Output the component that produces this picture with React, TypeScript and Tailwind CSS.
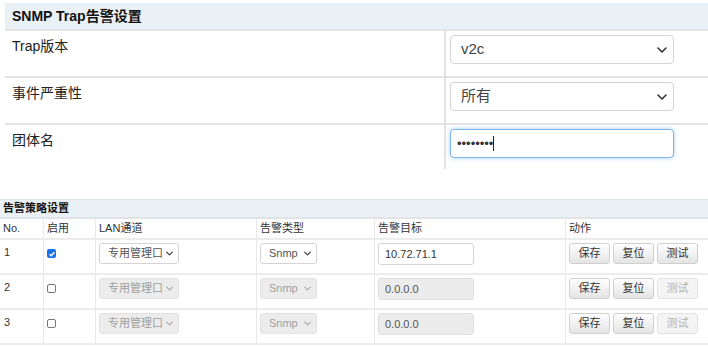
import React from 'react';

const font = { fontFamily: '"Liberation Sans", Arial, "Noto Sans CJK SC", sans-serif' };

const Chevron: React.FC<{ className?: string }> = ({ className = '' }) => (
  <svg viewBox="0 0 10 6" className={className} fill="none" stroke="currentColor" strokeWidth="1.6" strokeLinecap="round" strokeLinejoin="round">
    <path d="M1 1l4 4 4-4" />
  </svg>
);

const TopRow: React.FC<{ label: string; children: React.ReactNode; last?: boolean }> = ({ label, children, last }) => (
  <div className={`grid grid-cols-[439px_1fr] ${last ? 'h-[44px]' : 'h-[47px] border-b-2 border-[#e3e3e3]'}`}>
    <div className="px-[7px] pt-[5px] text-[14px] text-[#222]">{label}</div>
    <div className="border-l-2 border-[#e3e3e3] pl-[4px] pt-[4px]">{children}</div>
  </div>
);

const BigSelect: React.FC<{ value: string }> = ({ value }) => (
  <div className="w-[224px] h-[29px] rounded-[4px] border border-[#d4d4d4] bg-white flex items-center justify-between pl-[10px] pr-[6px] text-[15px] text-[#444]">
    <span>{value}</span>
    <Chevron className="w-[10px] h-[6px] text-[#333]" />
  </div>
);

const rows = [
  { no: '1', on: true, ip: '10.72.71.1' },
  { no: '2', on: false, ip: '0.0.0.0' },
  { no: '3', on: false, ip: '0.0.0.0' },
];

const cols = 'grid grid-cols-[43px_52px_161px_118px_191px_1fr]';
const cell = 'border-l border-[#e8e8e8] pl-[3px]';

const SmallSelect: React.FC<{ value: string; width: string; off: boolean }> = ({ value, width, off }) => (
  <div className={`${width} h-[21px] rounded-[3px] border flex items-center justify-between pl-[8px] pr-[5px] text-[11px] whitespace-nowrap ${off ? 'bg-[#ececec] border-[#e2e2e2] text-[#a0a0a0]' : 'bg-white border-[#d4d4d4] text-[#555]'}`}>
    <span>{value}</span>
    <Chevron className={`w-[7px] h-[5px] shrink-0 ${off ? 'text-[#aaa]' : 'text-[#333]'}`} />
  </div>
);

const Btn: React.FC<{ label: string; off?: boolean }> = ({ label, off }) => (
  <div className={`w-[41px] h-[21px] rounded-[3px] border flex items-center justify-center text-[11px] ${off ? 'border-[#e2e2e2] bg-[#f4f4f4] text-[#b5b5b5]' : 'border-[#cfcfcf] bg-gradient-to-b from-white to-[#e4e4e4] text-[#333]'}`}>
    {label}
  </div>
);

export default function App() {
  return (
    <div className="w-[708px] h-[346px] bg-white overflow-hidden" style={font}>
      <div className="ml-[5px] mt-[3px]">
        <div className="h-[28px] bg-[#eaf1f6] border-b-2 border-[#e3e3e3] flex items-center px-[7px] text-[14px] font-bold text-[#111]">
          SNMP Trap告警设置
        </div>
        <TopRow label="Trap版本"><BigSelect value="v2c" /></TopRow>
        <TopRow label="事件严重性"><BigSelect value="所有" /></TopRow>
        <TopRow label="团体名" last>
          <div className="w-[224px] h-[29px] rounded-[4px] border border-[#7fb6ec] shadow-[0_0_4px_rgba(102,175,233,0.6)] bg-white flex items-center pl-[6px]">
            <span className="text-[13px] leading-none text-[#333]">••••••••</span>
            <span className="w-[1px] h-[15px] bg-[#222]" />
          </div>
        </TopRow>
      </div>

      <div className="mt-[30px]">
        <div className="h-[20px] bg-[#eaf1f6] border-t border-[#dfe6ea] border-b-2 border-b-[#e3e3e3] flex items-center pl-[3px] text-[11px] font-bold text-[#111]">
          告警策略设置
        </div>
        <div className={`${cols} h-[21px] text-[11px] text-[#333] border-b-2 border-[#ececec] items-center`}>
          <div className="pl-[3px]">No.</div>
          <div className={`${cell} h-full flex items-center`}>启用</div>
          <div className={`${cell} h-full flex items-center`}>LAN通道</div>
          <div className={`${cell} h-full flex items-center`}>告警类型</div>
          <div className={`${cell} h-full flex items-center`}>告警目标</div>
          <div className={`${cell} h-full flex items-center`}>动作</div>
        </div>
        {rows.map((r) => (
          <div key={r.no} className={`${cols} h-[35px] text-[11px] text-[#333] border-b-2 border-[#ececec]`}>
            <div className="pl-[4px] pt-[4px]">{r.no}</div>
            <div className={`${cell} pt-[9px] pl-[3px]`}>
              {r.on ? (
                <div className="w-[9px] h-[9px] rounded-[2px] bg-[#1a73e8] flex items-center justify-center">
                  <svg viewBox="0 0 10 10" className="w-[8px] h-[8px]" fill="none" stroke="white" strokeWidth="1.8">
                    <path d="M2 5.2l2 2 4-4.5" />
                  </svg>
                </div>
              ) : (
                <div className="w-[9px] h-[9px] rounded-[2px] border border-[#777] bg-white" />
              )}
            </div>
            <div className={`${cell} pt-[3px]`}>
              <SmallSelect value="专用管理口" width="w-[80px]" off={!r.on} />
            </div>
            <div className={`${cell} pt-[3px]`}>
              <SmallSelect value="Snmp" width="w-[57px]" off={!r.on} />
            </div>
            <div className={`${cell} pt-[3px]`}>
              <div className={`w-[96px] h-[22px] rounded-[3px] border flex items-center pl-[6px] text-[11px] ${r.on ? 'bg-white border-[#d4d4d4] text-[#333]' : 'bg-[#ececec] border-[#e0e0e0] text-[#555]'}`}>
                {r.ip}
              </div>
            </div>
            <div className={`${cell} pt-[3px] flex gap-[3px] items-start`}>
              <Btn label="保存" />
              <Btn label="复位" />
              <Btn label="测试" off={!r.on} />
            </div>
          </div>
        ))}
      </div>
    </div>
  );
}
